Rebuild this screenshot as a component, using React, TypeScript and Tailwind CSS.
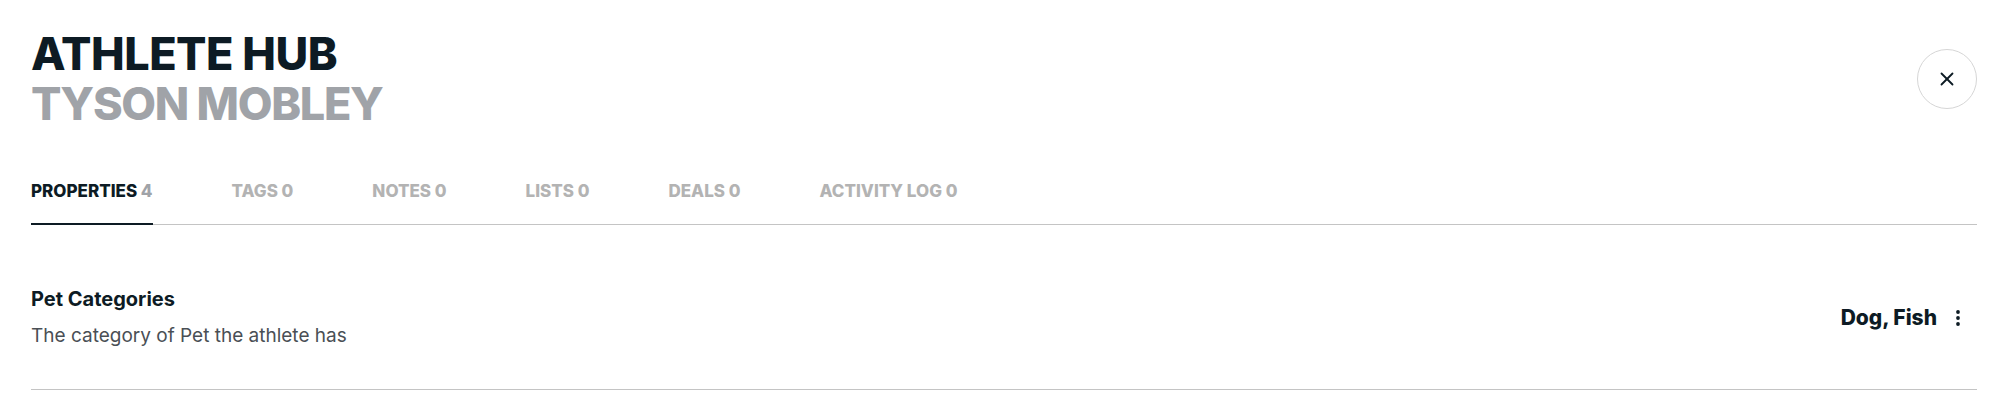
import { X } from 'lucide-react'

const tabs = [
  { label: 'PROPERTIES', count: 4 },
  { label: 'TAGS', count: 0 },
  { label: 'NOTES', count: 0 },
  { label: 'LISTS', count: 0 },
  { label: 'DEALS', count: 0 },
  { label: 'ACTIVITY LOG', count: 0 },
]

function Kebab() {
  return (
    <svg width="6" height="18" viewBox="0 0 6 18" fill="#0d1b24" aria-hidden>
      <circle cx="3" cy="3" r="1.9" />
      <circle cx="3" cy="9" r="1.9" />
      <circle cx="3" cy="15" r="1.9" />
    </svg>
  )
}

export default function App() {
  return (
    <div className="min-h-screen bg-white pl-[31px] pr-[23px] pt-[29px] font-['Inter',sans-serif] text-[#0d1b24]">

      {/* Header */}
      <div className="flex items-center justify-between">
        <h1 className="text-[45px] font-extrabold leading-[50px] uppercase">
          <div className="tracking-[-0.5px]">Athlete Hub</div>
          <div className="tracking-[-1.3px] text-[#a0a3a8]">Tyson Mobley</div>
        </h1>
        <button className="w-[60px] h-[60px] rounded-full border border-[#d6d6d6] flex items-center justify-center text-[#0d1b24]">
          <X size={22} strokeWidth={2} />
        </button>
      </div>

      {/* Tabs */}
      <div className="mt-[52px] flex gap-[79px] border-b border-[#c4c4c4]">
        {tabs.map((t, i) => (
          <button
            key={t.label}
            className={
              i === 0
                ? 'pb-[22px] -mb-px border-b-2 border-[#0d1b24] text-[17px] font-extrabold leading-[20px] text-[#0d1b24]'
                : 'pb-[22px] -mb-px border-b-2 border-transparent text-[17px] font-extrabold leading-[20px] text-[#b3b3b3]'
            }
          >
            {t.label} <span className={i === 0 ? 'text-[#a0a3a8]' : ''}>{t.count}</span>
          </button>
        ))}
      </div>

      {/* Property row */}
      <div className="pt-[60px] pb-[39px] flex items-center justify-between border-b border-[#c4c4c4]">
        <div className="flex flex-col gap-[9px]">
          <div className="text-[20px] font-bold leading-[28px]">Pet Categories</div>
          <div className="text-[19px] leading-[28px] text-[#4a4f55]">The category of Pet the athlete has</div>
        </div>
        <div className="flex items-center gap-[18px] pr-[16px]">
          <span className="text-[21px] font-extrabold leading-[28px]">Dog, Fish</span>
          <Kebab />
        </div>
      </div>

    </div>
  )
}
